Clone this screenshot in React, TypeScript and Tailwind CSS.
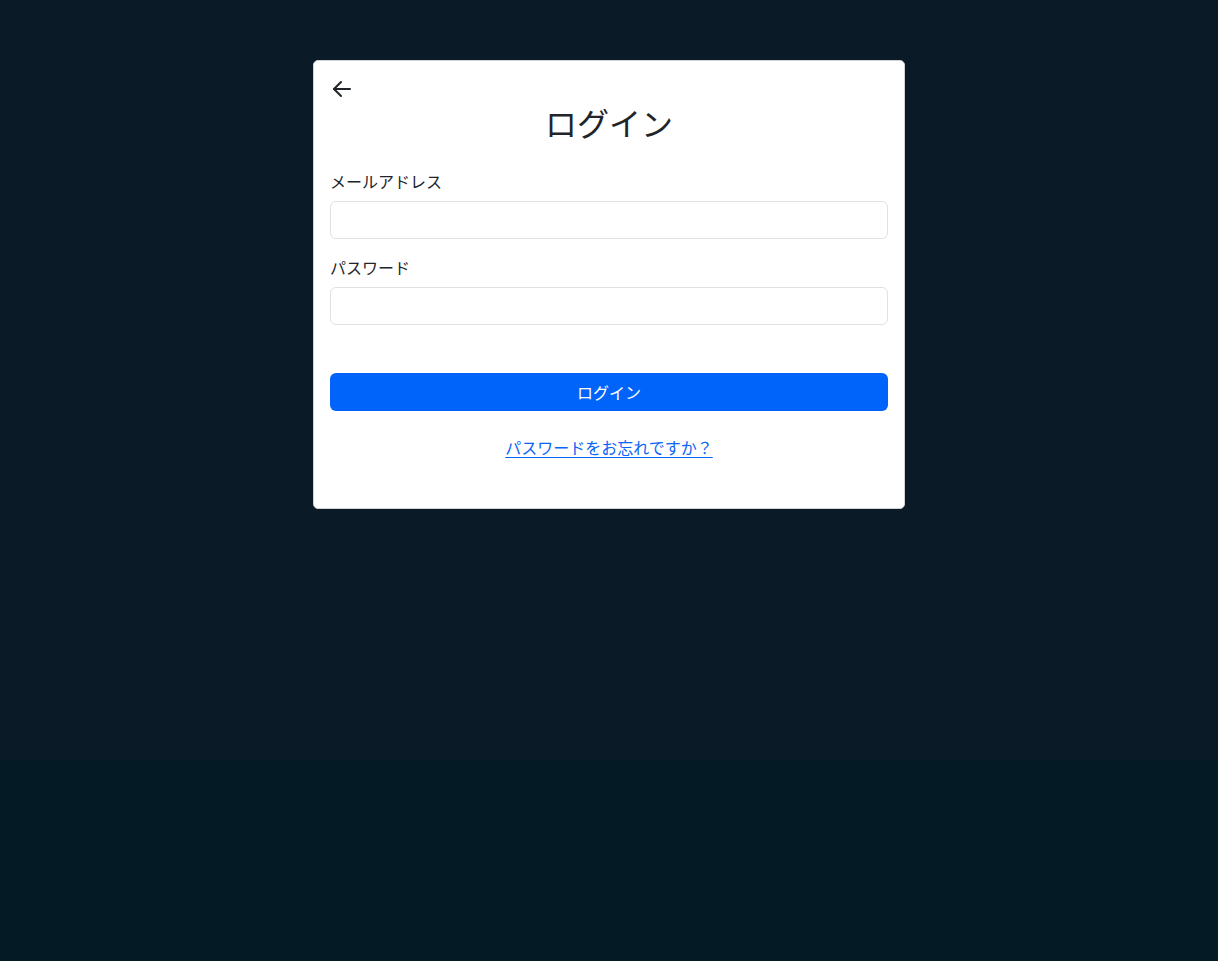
export default function App() {
  return (
    <div
      className="min-h-screen bg-[#041a25] text-[#212529]"
      style={{ fontFamily: '"Noto Sans CJK JP", "Noto Sans", sans-serif' }}
    >
      <main className="h-[760px] bg-[#0a1b27] pt-[60px]">
        <div className="mx-auto w-[592px] rounded-[5px] border border-[#d0d4d8] bg-white px-4 pt-4 pb-[49px]">
          {/* back */}
          <button className="flex h-6 w-6 items-center text-[#212529]">
            <svg width="20" height="18" viewBox="0 0 20 18" fill="none" stroke="currentColor" strokeWidth="2" strokeLinecap="round" strokeLinejoin="round" className="ml-[2px]">
              <path d="M18 9H2" />
              <path d="M9 2 2 9l7 7" />
            </svg>
          </button>
          <h2 className="mt-[2px] mb-[28px] text-center text-[32px] font-normal leading-[1.2]">ログイン</h2>

          <form className="flex flex-col">
            <label className="mb-2 text-base leading-6">メールアドレス</label>
            <input type="email" className="mb-4 h-[38px] w-full rounded-[6px] border border-[#dee2e6] px-3 outline-none" />
            <label className="mb-2 text-base leading-6">パスワード</label>
            <input type="password" className="h-[38px] w-full rounded-[6px] border border-[#dee2e6] px-3 outline-none" />
            <button type="button" className="mt-12 h-[38px] w-full rounded-[6px] bg-[#0064fa] text-base text-white">
              ログイン
            </button>
          </form>

          <div className="mt-6 text-center leading-6">
            <a href="#" className="text-base text-[#0a64f5] underline underline-offset-[3px]">パスワードをお忘れですか？</a>
          </div>
        </div>
      </main>
    </div>
  );
}
